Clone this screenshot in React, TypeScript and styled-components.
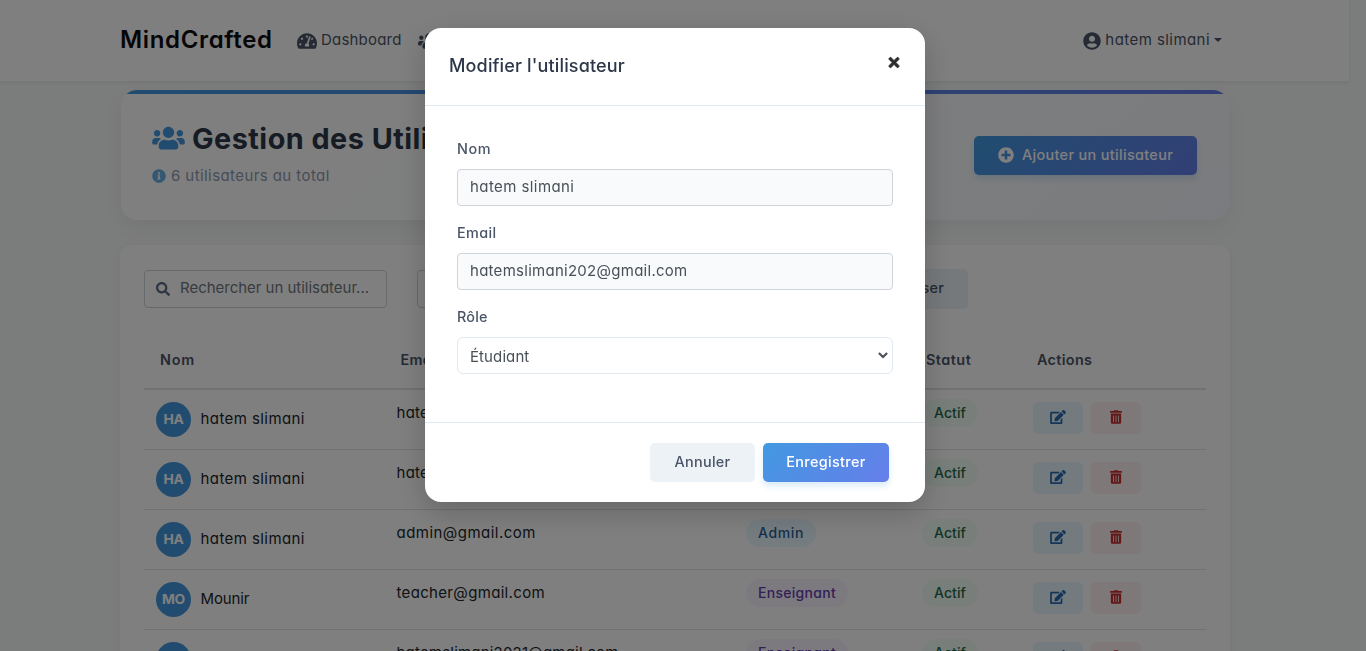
import React from 'react';
import styled, { createGlobalStyle, css } from 'styled-components';
import {
  FaEdit,
  FaInfoCircle,
  FaPlusCircle,
  FaSearch,
  FaTachometerAlt,
  FaTimes,
  FaTrashAlt,
  FaUserCircle,
  FaUsers,
} from 'react-icons/fa';

const GlobalStyle = createGlobalStyle`
  * { box-sizing: border-box; }
  html, body { height: 100%; overflow: hidden; }
  body {
    margin: 0;
    background: #f7f8f8;
    color: #212529;
    font-family: Inter, "Open Sans", sans-serif;
    font-feature-settings: "cv11";
    font-size: 14.4px;
    line-height: 22px;
  }
  button, input { font: inherit; font-feature-settings: inherit; }
`;

const Txt = styled.span<{ $ls?: number }>`
  letter-spacing: ${(p) => p.$ls ?? 0}px;
  white-space: nowrap;
`;

const gradient = 'linear-gradient(135deg, #4299e1 0%, #667eea 100%)';

const Page = styled.div`
  height: 651px;
  padding-right: 17px;
  overflow: hidden;
`;

const Navbar = styled.nav`
  height: 81px;
  padding: 0 127px 2px 120px;
  display: flex;
  align-items: center;
  background: #fff;
  box-shadow: 0 2px 4px rgba(0, 0, 0, 0.06);
`;

const Brand = styled.span`
  width: 177px;
  font-size: 24px;
  font-weight: 600;
  line-height: 30px;
  color: #0c0c0e;
  white-space: nowrap;
  letter-spacing: 0.65px;
`;

const NavLink = styled.span`
  display: flex;
  align-items: center;
  gap: 4px;
  margin-right: 16px;
  font-size: 15px;
  color: #4a5568;
  svg { margin-top: 2px; }
`;

const UserMenu = styled(NavLink)`
  margin: 0 0 0 auto;
`;

const Caret = styled.i`
  border: 4px solid transparent;
  border-top-color: #4a5568;
  border-bottom: 0;
`;

const HeaderCard = styled.header`
  margin: 9px 120px 25px 121px;
  height: 130px;
  padding: 0 32px;
  display: flex;
  align-items: center;
  justify-content: space-between;
  border-radius: 16px;
  background: linear-gradient(90deg, #4299e1, #667eea) top / 100% 4px no-repeat,
    linear-gradient(135deg, #fff 0%, #fdfeff 45%, #f5f7fc 100%);
  box-shadow: 0 8px 20px rgba(0, 0, 0, 0.05);
`;

const HeaderText = styled.div`
  height: 82px;
`;

const Title = styled.h1`
  margin: 0;
  display: flex;
  align-items: center;
  gap: 7px;
  height: 49px;
  font-size: 28.8px;
  font-weight: 700;
  color: #2d3748;
  svg {
    margin: 0 0 1px -1px;
    color: #4299e1;
  }
`;

const Subtitle = styled.p`
  margin: 2px 0 0 -1px;
  display: flex;
  align-items: center;
  gap: 5px;
  font-size: 15px;
  color: #8f9bb0;
  svg { color: #68aee6; }
`;

const Button = styled.button<{ $variant: 'primary' | 'light'; $w: number }>`
  width: ${(p) => p.$w}px;
  height: 39px;
  padding: 0 0 1px;
  display: flex;
  flex: none;
  align-items: center;
  justify-content: center;
  gap: 8px;
  border: 0;
  border-radius: 5px;
  font-weight: 500;
  ${(p) =>
    p.$variant === 'primary'
      ? css`
          color: #fff;
          background: ${gradient};
          box-shadow: 0 4px 6px rgba(66, 153, 225, 0.2);
        `
      : css`
          color: #4a5568;
          background: #edf2f7;
        `}
`;

const TableCard = styled.section`
  margin: 0 119px 0 120px;
  height: 500px;
  padding: 24px;
  border-radius: 12px;
  background: #fff;
  box-shadow: 0 4px 10px rgba(0, 0, 0, 0.05);
`;

const Filters = styled.div`
  display: flex;
  align-items: center;
  gap: 30px;
  height: 40px;
`;

const SearchBox = styled.div<{ $w: number }>`
  width: ${(p) => p.$w}px;
  height: 38px;
  padding: 0 11px 2px;
  display: flex;
  align-items: center;
  gap: 10px;
  border: 1px solid #ced4da;
  border-radius: 4px;
  font-size: 15px;
  color: #717880;
  svg {
    margin-top: 2px;
    color: #5a6c80;
  }
`;

const ResetButton = styled(Button)`
  height: 40px;
  margin-left: -15px;
  justify-content: flex-end;
  padding: 0 24px 2px 0;
`;

const gridColumns = css`
  display: grid;
  grid-template-columns: 240.5px 349.5px 176px 111px 1fr;
`;

const TableHead = styled.div`
  ${gridColumns}
  margin-top: 21px;
  padding-top: 2px;
  height: 60px;
  align-items: center;
  border-bottom: 2px solid #dee2e6;
  color: #4a5568;
  font-weight: 600;
  > span { padding-left: 16px; }
`;

const TableRow = styled.div`
  ${gridColumns}
  height: 60px;
  border-bottom: 1px solid #dee2e6;
  font-size: 15px;
  color: #212529;
`;

const Cell = styled.div<{ $top: number; $gap?: number }>`
  padding: ${(p) => p.$top}px 0 0 12px;
  display: flex;
  align-items: flex-start;
  align-self: start;
  gap: ${(p) => p.$gap ?? 0}px;
`;

const NameCell = styled(Cell)`
  > span:last-child { padding-top: 6px; }
`;

const Avatar = styled.span`
  width: 35px;
  height: 35px;
  padding-bottom: 1px;
  border-radius: 50%;
  display: grid;
  place-items: center;
  background: #4299e1;
  color: #fff;
  font-size: 13.8px;
  font-weight: 700;
`;

const badgeColors = {
  Admin: ['#2a5f98', '#ebf8ff'],
  Enseignant: ['#6340b0', '#faf5ff'],
  Actif: ['#276749', '#f0fff4'],
};

const Badge = styled.span<{ $kind: keyof typeof badgeColors; $w: number }>`
  width: ${(p) => p.$w}px;
  height: 28px;
  display: flex;
  align-items: center;
  justify-content: center;
  border-radius: 14px;
  font-size: 14px;
  font-weight: 500;
  color: ${(p) => badgeColors[p.$kind][0]};
  background: ${(p) => badgeColors[p.$kind][1]};
`;

const IconButton = styled.button<{ $danger?: boolean }>`
  width: 50px;
  height: 32px;
  padding: 0 0 2px;
  display: flex;
  align-items: center;
  justify-content: center;
  border: 0;
  border-radius: 5px;
  color: ${(p) => (p.$danger ? '#c53030' : '#2b6cb0')};
  background: ${(p) => (p.$danger ? '#fff0f0' : '#e6f6ff')};
`;

const Overlay = styled.div`
  position: fixed;
  inset: 0;
  padding-top: 28px;
  display: flex;
  justify-content: center;
  align-items: flex-start;
  background: rgba(0, 0, 0, 0.5);
`;

const Modal = styled.div`
  width: 500px;
  height: 474px;
  margin-right: 16px;
  display: flex;
  flex-direction: column;
  border-radius: 16px;
  background: #fff;
  box-shadow: 0 10px 30px rgba(0, 0, 0, 0.2);
`;

const ModalHeader = styled.div`
  height: 78px;
  padding: 0 25px 2px 24px;
  display: flex;
  align-items: center;
  justify-content: space-between;
  border-bottom: 1px solid #e2e8f0;
`;

const ModalTitle = styled.h2`
  margin: 0;
  font-size: 18px;
  font-weight: 500;
  color: #2d3748;
`;

const Close = styled.button`
  height: 18px;
  margin: 0 0 6px;
  padding: 0;
  display: flex;
  align-items: center;
  border: 0;
  background: none;
  color: #2b2d2f;
  svg {
    stroke: currentColor;
    stroke-width: 24px;
  }
`;

const ModalBody = styled.div`
  flex: 1;
  padding: 32px;
`;

const Field = styled.div`
  display: block;
  height: 84px;
`;

const Label = styled.label`
  display: block;
  height: 22px;
  font-weight: 500;
  color: #4a5568;
`;

const Control = styled.div<{ $select?: boolean }>`
  margin-top: 9px;
  height: 37px;
  padding: ${(p) => (p.$select ? '2px 4px 0 12px' : '0 4px 1px 12px')};
  display: flex;
  align-items: center;
  justify-content: space-between;
  border: 1px solid ${(p) => (p.$select ? '#e2e8f0' : '#ced4da')};
  border-radius: ${(p) => (p.$select ? 6 : 4)}px;
  background: ${(p) => (p.$select ? '#fff' : '#f8fafc')};
  font-size: 15px;
  color: #495057;
  svg { margin-bottom: 2px; }
`;

const ModalFooter = styled.div`
  height: 80px;
  padding: 20px 36px 0;
  display: flex;
  justify-content: flex-end;
  gap: 8px;
  border-top: 1px solid #e2e8f0;
`;

type Role = 'Admin' | 'Enseignant';

const users: { initials: string; name: string; email: string; role: Role; ls: number }[] = [
  { initials: 'HA', name: 'hatem slimani', email: 'hatemslimani202@gmail.com', role: 'Admin', ls: 0.26 },
  { initials: 'HA', name: 'hatem slimani', email: 'hatem@gmail.com', role: 'Admin', ls: 0.26 },
  { initials: 'HA', name: 'hatem slimani', email: 'admin@gmail.com', role: 'Admin', ls: 0.47 },
  { initials: 'MO', name: 'Mounir', email: 'teacher@gmail.com', role: 'Enseignant', ls: 0.33 },
  { initials: 'HA', name: 'hatem slimani', email: 'hatemslimani2021@gmail.com', role: 'Enseignant', ls: 0.2 },
];

const UserRow = ({ user }: { user: (typeof users)[number] }) => (
  <TableRow>
    <NameCell $top={12} $gap={9.5}>
      <Avatar>
        <Txt $ls={-0.2}>{user.initials}</Txt>
      </Avatar>
      <Txt $ls={user.name === 'Mounir' ? -0.15 : 0.42}>{user.name}</Txt>
    </NameCell>
    <Cell $top={12}>
      <Txt $ls={user.ls}>{user.email}</Txt>
    </Cell>
    <Cell $top={9}>
      <Badge $kind={user.role} $w={user.role === 'Admin' ? 70 : 102}>
        <Txt $ls={user.role === 'Admin' ? 0.63 : 0.3}>{user.role}</Txt>
      </Badge>
    </Cell>
    <Cell $top={9}>
      <Badge $kind="Actif" $w={56}>
        <Txt $ls={0.1}>Actif</Txt>
      </Badge>
    </Cell>
    <Cell $top={12} $gap={8}>
      <IconButton aria-label="Modifier">
        <FaEdit style={{ width: 16, height: 14 }} />
      </IconButton>
      <IconButton $danger aria-label="Supprimer">
        <FaTrashAlt style={{ width: 12, height: 14 }} />
      </IconButton>
    </Cell>
  </TableRow>
);

export default function App() {
  return (
    <>
      <GlobalStyle />
      <Page>
        <Navbar>
          <Brand>MindCrafted</Brand>
          <NavLink>
            <FaTachometerAlt style={{ width: 20, height: 18 }} />
            <Txt $ls={0.2}>Dashboard</Txt>
          </NavLink>
          <NavLink>
            <FaUsers style={{ width: 22, height: 18 }} />
          </NavLink>
          <UserMenu>
            <FaUserCircle size={18} />
            <Txt $ls={0.44}>hatem slimani</Txt>
            <Caret />
          </UserMenu>
        </Navbar>
        <HeaderCard>
          <HeaderText>
            <Title>
              <FaUsers style={{ width: 33, height: 26 }} />
              <Txt $ls={0.48}>Gestion des Utilisateurs</Txt>
            </Title>
            <Subtitle>
              <FaInfoCircle size={14} />
              <Txt $ls={0.42}>6 utilisateurs au total</Txt>
            </Subtitle>
          </HeaderText>
          <Button $variant="primary" $w={223}>
            <FaPlusCircle size={16} />
            <Txt $ls={0.35}>Ajouter un utilisateur</Txt>
          </Button>
        </HeaderCard>
        <TableCard>
          <Filters>
            <SearchBox $w={243}>
              <FaSearch size={14} />
              <Txt $ls={-0.02}>Rechercher un utilisateur...</Txt>
            </SearchBox>
            <SearchBox $w={243} />
            <ResetButton $variant="light" $w={293}>
              <Txt $ls={0.24}>Réinitialiser</Txt>
            </ResetButton>
          </Filters>
          <TableHead>
            <Txt $ls={0.8}>Nom</Txt>
            <Txt $ls={0.3}>Email</Txt>
            <Txt $ls={0.3}>Rôle</Txt>
            <Txt $ls={0.5}>Statut</Txt>
            <Txt $ls={0.33}>Actions</Txt>
          </TableHead>
          {users.map((user, i) => (
            <UserRow key={i} user={user} />
          ))}
        </TableCard>
      </Page>
      <Overlay>
        <Modal>
          <ModalHeader>
            <ModalTitle>
              <Txt $ls={0.15}>Modifier l'utilisateur</Txt>
            </ModalTitle>
            <Close aria-label="Fermer">
              <FaTimes style={{ width: 12, height: 15 }} />
            </Close>
          </ModalHeader>
          <ModalBody>
            <Field>
              <Label>
                <Txt $ls={0.6}>Nom</Txt>
              </Label>
              <Control>
                <Txt $ls={0.42}>hatem slimani</Txt>
              </Control>
            </Field>
            <Field>
              <Label>
                <Txt $ls={0.35}>Email</Txt>
              </Label>
              <Control>
                <Txt $ls={0.27}>hatemslimani202@gmail.com</Txt>
              </Control>
            </Field>
            <Field>
              <Label>
                <Txt $ls={0.2}>Rôle</Txt>
              </Label>
              <Control $select>
                <Txt $ls={0.1}>Étudiant</Txt>
                <svg width="10" height="7" viewBox="0 0 10 7" fill="none" stroke="#495057" strokeWidth="2.2">
                  <path d="M0.9 1l4.1 4 4.1-4" />
                </svg>
              </Control>
            </Field>
          </ModalBody>
          <ModalFooter>
            <Button $variant="light" $w={105}>
              <Txt $ls={0.28}>Annuler</Txt>
            </Button>
            <Button $variant="primary" $w={126}>
              <Txt $ls={0.35}>Enregistrer</Txt>
            </Button>
          </ModalFooter>
        </Modal>
      </Overlay>
    </>
  );
}
